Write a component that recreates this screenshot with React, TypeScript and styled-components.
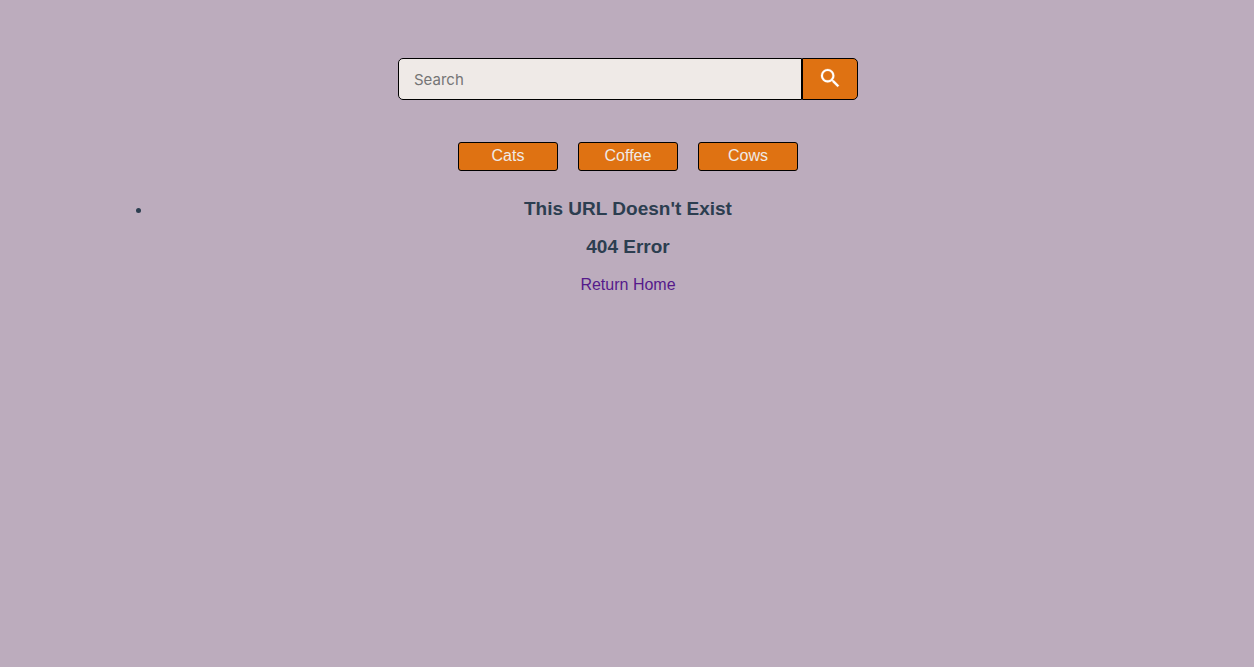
import React from 'react';
import styled, { createGlobalStyle } from 'styled-components';

const GlobalStyle = createGlobalStyle`
  body {
    margin: 0;
    background: #bcacbd;
    color: #2c3e50;
    font-family: Helvetica, 'Liberation Sans', Arial, sans-serif;
    font-size: 16px;
    line-height: 20px;
  }
  *, *::before, *::after { box-sizing: border-box; }
`;

const Page = styled.div`
  display: flex;
  flex-direction: column;
  align-items: center;
  padding: 58px 0 0 2px;
`;

const SearchForm = styled.form`
  display: flex;
  width: 100%;
  max-width: 460px;
  height: 42px;
`;

const SearchInput = styled.input`
  flex: 1;
  min-width: 0;
  padding: 0 15px;
  border: 1px solid #000;
  border-radius: 5px 0 0 5px;
  background: #efeae7;
  color: #2c3e50;
  font-family: Inter, sans-serif;
  font-size: 15px;
  outline: none;

  &::placeholder { color: #757575; opacity: 1; }
`;

const SearchButton = styled.button`
  display: flex;
  align-items: center;
  justify-content: center;
  width: 56px;
  padding: 0 0 2px;
  border: 1px solid #000;
  border-radius: 0 5px 5px 0;
  background: #df7212;
  color: #fff;
  cursor: pointer;
`;

const Nav = styled.nav`
  display: flex;
  gap: 20px;
  margin-top: 42px;
`;

const TopicButton = styled.button`
  width: 100px;
  height: 29px;
  padding: 0 0 2px;
  border: 1px solid #000;
  border-radius: 3px;
  background: #df7212;
  color: #efeae7;
  font: inherit;
  cursor: pointer;
`;

const Results = styled.ul`
  width: 76%;
  margin: 28px 0 0;
  padding: 0;
  text-align: center;
`;

const Heading = styled.h3`
  margin: 0 0 18px;
  font-size: 19px;
  line-height: 20px;
  font-weight: 700;
`;

const HomeLink = styled.a`
  color: #551a8b;
  text-decoration: none;
`;

const topics = ['Cats', 'Coffee', 'Cows'];

export default function App() {
  return (
    <>
      <GlobalStyle />
      <Page>
        <SearchForm role="search" onSubmit={(e) => e.preventDefault()}>
          <SearchInput type="search" placeholder="Search" aria-label="Search" />
          <SearchButton type="submit" aria-label="Submit search">
            <svg width="26" height="26" viewBox="-0.75 -0.75 25 25" fill="currentColor" aria-hidden="true">
              <path
                d="M15.5 14h-.79l-.28-.27A6.47 6.47 0 0 0 16 9.5 6.5 6.5 0 1 0 9.5 16c1.61 0 3.09-.59 4.23-1.57l.27.28v.79l5 4.99L20.49 19l-4.99-5zm-6 0C7.01 14 5 11.99 5 9.5S7.01 5 9.5 5 14 7.01 14 9.5 11.99 14 9.5 14z"
                stroke="currentColor"
                strokeWidth="0.2"
              />
            </svg>
          </SearchButton>
        </SearchForm>
        <Nav>
          {topics.map((topic) => (
            <TopicButton key={topic} type="button">{topic}</TopicButton>
          ))}
        </Nav>
        <Results>
          <li>
            <Heading>This URL Doesn't Exist</Heading>
            <Heading>404 Error</Heading>
            <HomeLink href="/">Return Home</HomeLink>
          </li>
        </Results>
      </Page>
    </>
  );
}
